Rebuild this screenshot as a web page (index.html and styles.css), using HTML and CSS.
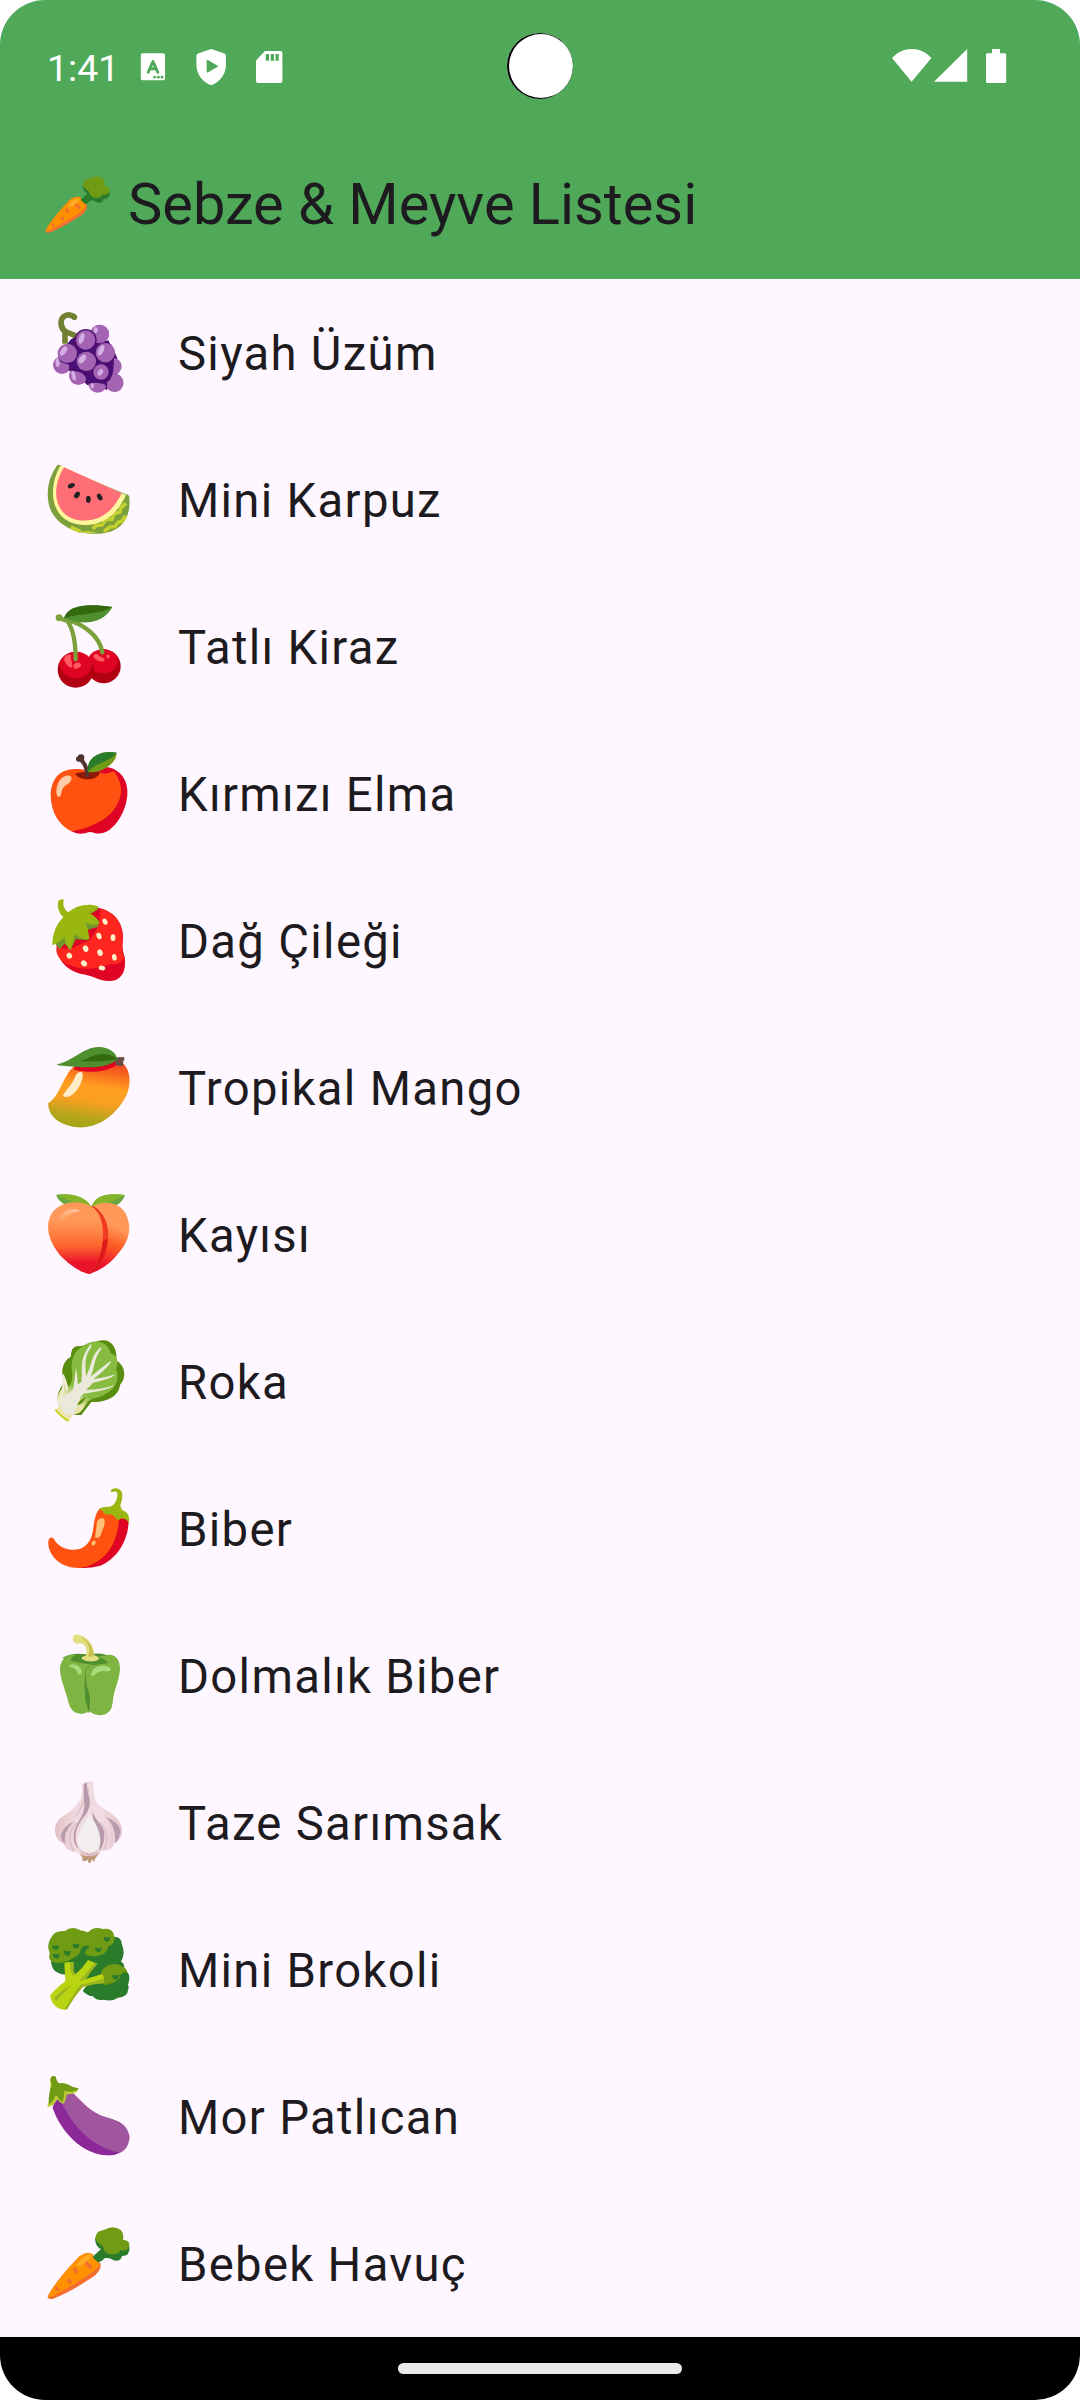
FILE: index.html
```html
<!DOCTYPE html>
<html lang="tr">
<head>
<meta charset="utf-8">
<title>Sebze &amp; Meyve Listesi</title>
<link rel="stylesheet" href="styles.css">
</head>
<body>
<div class="screen">
  <header class="app-bar">
    <div class="status">
      <div class="status-left">
        <span class="clock">1:41</span>
        <svg class="st" width="26" viewBox="140 48 26 38"><rect x="140.800" y="53.300" width="24.200" height="27" rx="1.800" fill="#fff"/><path d="M148.300 72.200L153 61.500L157.700 72.200M150 68.700H156" fill="none" stroke="#50a958" stroke-width="2.900" stroke-linecap="round" stroke-linejoin="round"/><g fill="#50a958"><circle cx="154.700" cy="77.200" r="1.400"/><circle cx="158.400" cy="77.200" r="1.400"/><circle cx="162" cy="77.200" r="1.400"/></g></svg>
        <svg class="st shield" width="31" viewBox="196 48 31 38"><path d="M211.200 49L223.800 53.200Q226 54 226 56V64.500C226 74.500 219.500 82.500 211.200 85.300C202.800 82.500 196.400 74.500 196.400 64.500V56Q196.400 54 198.600 53.200Z" fill="#fff"/><path d="M206.600 60.800Q206.800 59.400 208.300 60.200L218.400 66.200L208.300 72.200Q206.800 73 206.600 71.500Z" fill="#50a958"/></svg>
        <svg class="st sd" width="28" viewBox="255 48 28 38"><path d="M265 51H280.400Q282.400 51 282.400 53V81Q282.400 83 280.400 83H258Q256 83 256 81V60.500Z" fill="#fff"/><path d="M265.800 54h3.200v6.700h-3.200zM270.700 54h3.300v6.700h-3.300zM275.500 54h3.200v6.700h-3.200z" fill="#50a958"/></svg>
      </div>
      <span class="camera"></span>
      <div class="status-right">
        <svg class="st" width="120" viewBox="890 48 120 38"><g fill="#fff"><path d="M911.600 81.800L892 58C903 46 920.500 46 931.400 58Z"/><path d="M967.200 49V81.800H934Z"/><path d="M992 49h8v4.300h4.800q1.400 0 1.400 1.400v26.900q0 1.400-1.400 1.400h-17.400q-1.400 0-1.400-1.400V54.700q0-1.400 1.400-1.400h4.600z"/></g></svg>
      </div>
    </div>
    <div class="title-row">
      <svg class="title-icon" viewBox="36 462 294 294"><use href="#carrot"/></svg>
      <h1 class="title">Sebze &amp; Meyve Listesi</h1>
    </div>
  </header>

  <ul class="list">
    <li class="row"><svg class="icon" viewBox="36 24 294 294">
      <path d="M134 66C116 54 95 60 93 82C93 102 102 112 122 116Q132 118 140 126M105 108V146" fill="none" stroke="#728031" stroke-width="17"/><circle cx="133" cy="67" r="8.500" fill="#728031"/>
      <path d="M124 132L188 105L245 150L262 190L262 250L230 284L172 270L122 226L84 206V180Z" fill="#4a0f72"/>
      <g fill="#a564b3"><circle cx="209" cy="117" r="28"/><circle cx="96" cy="210" r="27"/><circle cx="250" cy="214" r="25"/><circle cx="145" cy="242" r="28"/><circle cx="203" cy="265" r="28"/><circle cx="253" cy="264" r="27"/></g>
      <path d="M187 112L200 130Q218 142 236 136L252 190L250 226Q246 252 232 262L230 284Q228 264 214 266Q202 262 188 264L168 268Q172 240 150 232Q130 226 116 228L118 210L84 198L92 176L128 140Z" fill="#4a0f72"/>
      <g fill="#a564b3"><circle cx="209" cy="117" r="28"/></g><circle cx="167" cy="135" r="33" fill="#4a0f72"/><g fill="#a564b3"><circle cx="167" cy="135" r="29"/><circle cx="112" cy="175" r="29"/><circle cx="226" cy="173" r="29"/><circle cx="169" cy="199" r="29"/><circle cx="213" cy="231" r="23"/><path d="M230 262Q256 258 266 238Q282 250 280 268Q274 292 252 290Q232 282 230 262Z"/></g>
      <g fill="#d3aee3"><ellipse cx="155" cy="130" rx="7.500" ry="17" transform="rotate(18 155 130)"/><ellipse cx="101" cy="168" rx="8" ry="16" transform="rotate(35 101 168)"/><ellipse cx="213" cy="166" rx="8" ry="17" transform="rotate(25 213 166)"/><ellipse cx="157" cy="192" rx="8" ry="15" transform="rotate(38 157 192)"/><ellipse cx="211" cy="232" rx="7" ry="11" transform="rotate(30 211 232)"/><ellipse cx="197" cy="105" rx="6" ry="9"/><ellipse cx="83" cy="203" rx="6" ry="13"/><ellipse cx="131" cy="242" rx="6" ry="15" transform="rotate(-15 131 242)"/><ellipse cx="187" cy="272" rx="5" ry="8"/></g>
    </svg><span class="name">Siyah Üzüm</span></li>

    <li class="row"><svg class="icon" viewBox="36 465 294 294">
      <path d="M82 510Q92 507 95 516L288 598Q298 598 298 610C303 665 277 714 205 716C140 721 78 690 60 640C45 595 56 545 82 510Z" fill="#7ca03c"/>
      <g fill="none" stroke="#c5d02e" stroke-width="11" stroke-linejoin="round"><path d="M288 625L272 639L270 651L252 656L246 673L227 673L216 690L198 691L189 702"/><path d="M287 662L276 679L264 682L254 695L239 696L222 710"/><path d="M122 696L151 710"/></g>
      <path d="M148 710Q180 705 202 714Q172 717 148 710Z" fill="#c5d02e"/>
      <path d="M90 513L102 516L274 594L288 600C258 668 205 699 141 688C66 672 50 588 90 513Z" fill="#fff59d"/>
      <path d="M102 517L275 595C246 656 200 684 142 675C78 662 58 588 102 517Z" fill="#ff6d76"/>
      <g fill="#212121"><ellipse cx="124" cy="572" rx="11" ry="7" transform="rotate(-25 124 572)"/><ellipse cx="141" cy="600" rx="11" ry="7.500" transform="rotate(-55 141 600)"/><ellipse cx="175" cy="613" rx="7" ry="11"/><ellipse cx="209" cy="606" rx="7" ry="11" transform="rotate(-30 209 606)"/></g>
    </svg><span class="name">Mini Karpuz</span></li>

    <li class="row"><svg class="icon" viewBox="36 21 294 294">
      <circle cx="221" cy="229" r="51" fill="#b00012"/><ellipse cx="219" cy="214" rx="45" ry="36" fill="#df0423"/>
      <ellipse cx="137" cy="239" rx="54" ry="54" fill="#b00012"/><path d="M88 222Q100 186 138 185Q180 188 187 222Q180 263 137 265Q96 260 88 222Z" fill="#df0423"/>
      <path d="M102 208C104 196 117 190 124 196C120 208 128 216 127 230C124 240 107 226 102 208ZM131 224C137 216 149 216 154 223C151 238 130 240 131 230ZM190 200C192 190 202 188 208 198Q217 203 224 206C226 218 204 219 190 200ZM228 196q8-4 12 3q-2 8-9 6z" fill="#ff5a62"/>
      <path d="M88 83Q104 92 112 92C130 118 137 160 137 208M106 89C160 100 209 138 217 187" fill="none" stroke="#7ca03c" stroke-width="13" stroke-linecap="round"/><circle cx="87" cy="83" r="10" fill="#7ca03c"/>
      <path d="M102 84C115 47 166 39 247 51C224 95 166 112 102 84Z" fill="#508f2e"/><path d="M102 84C115 47 166 39 247 51C210 73 150 70 102 84Z" fill="#346a0f"/>
    </svg><span class="name">Tatlı Kiraz</span></li>

    <li class="row"><svg class="icon" viewBox="36 462 294 294">
      <path d="M172 541Q224 524 250 536C306 564 300 632 270 683C248 719 219 738 191 728Q180 723 168 729Q143 735 124 724Z" fill="#df0423"/>
      <path d="M172 541C95 524 63 561 62 617C63 666 87 706 124 724C167 718 213 698 240 673C283 627 281 583 252 544Q220 557 210 546Z" fill="#ff5210"/>
      <path d="M136 550Q172 541 210 546C206 574 144 576 136 550Z" fill="#8f1909"/>
      <path d="M144 503C159 512 172 532 172 560" fill="none" stroke="#4f332c" stroke-width="12"/><circle cx="153" cy="503" r="10" fill="#4f332c"/><circle cx="146" cy="507" r="8" fill="#4f332c"/>
      <path d="M174 546C167 508 206 479 260 488C260 520 214 553 174 546Z" fill="#709b15"/><path d="M174 546C167 508 206 479 260 488C233 521 196 516 174 546Z" fill="#2a7b2a"/>
      <path d="M79 608C78 571 104 551 121 558C131 566 119 580 107 586C92 598 96 611 91 619Q82 625 79 608Z" fill="#ffcca8"/>
    </svg><span class="name">Kırmızı Elma</span></li>

    <li class="row"><svg class="icon" viewBox="36 18 294 294">
      <path d="M79 178C89 119 150 69 207 69C259 80 285 124 278 171Q276 198 284 215C290 260 274 288 236 288C204 287 188 270 150 266C104 253 81 221 79 178Z" fill="#df0423"/>
      <path d="M88 190L120 192L180 165L206 122L212 72C258 81 282 124 277 171Q273 206 283 216Q276 239 240 238C204 249 181 255 143 248C99 240 77 216 79 190Z" fill="#ff2620"/>
      <path d="M77 176L88 193L104 176L122 195L137 163L176 166L172 135L203 126L208 107L180 88L207 72L138 67Z" fill="#6f982c"/>
      <path d="M84 53Q84 43 101 43Q96 71 115 82C137 62 174 52 207 65Q190 85 175 84Q198 90 208 116Q190 124 165 113Q175 127 178 162Q151 165 134 147Q132 173 120 194Q104 178 104 155Q88 175 67 180C67 145 80 116 100 97Q80 77 84 53Z" fill="#9ab711"/>
      <g fill="#fff3ca"><ellipse cx="225" cy="110" rx="7" ry="9.500" transform="rotate(-25 225 110)"/><ellipse cx="207" cy="153" rx="7.500" ry="10" transform="rotate(-20 207 153)"/><ellipse cx="249" cy="158" rx="7" ry="10"/><ellipse cx="167" cy="191" rx="8" ry="10" transform="rotate(-25 167 191)"/><ellipse cx="210" cy="203" rx="8" ry="10" transform="rotate(-25 210 203)"/><ellipse cx="253" cy="217" rx="7" ry="10" transform="rotate(-10 253 217)"/><ellipse cx="118" cy="212" rx="8" ry="9" transform="rotate(-35 118 212)"/><ellipse cx="162" cy="235" rx="8" ry="10" transform="rotate(-45 162 235)"/><ellipse cx="216" cy="249" rx="10" ry="7" transform="rotate(10 216 249)"/></g>
    </svg><span class="name">Dağ Çileği</span></li>

    <li class="row"><svg class="icon" viewBox="36 459 294 294">
      <defs><linearGradient id="mango" x1=".6" y1="0" x2=".42" y2="1"><stop offset=".05" stop-color="#f5511e"/><stop offset=".38" stop-color="#ff9e20"/><stop offset=".6" stop-color="#f9a021"/><stop offset=".86" stop-color="#b3a51a"/><stop offset="1" stop-color="#a3a516"/></linearGradient></defs>
      <path d="M133 543Q204 544 259 528Q280 532 288 546C305 572 300 615 285 639C251 698 200 730 143 727C96 722 57 702 54 655C89 636 99 571 133 543Z" fill="url(#mango)"/>
      <path d="M133 543L260 522L266 537C229 562 184 566 133 554Z" fill="#df0423"/>
      <path d="M255 531L262 517L281 516L284 523L280 528L279 543Q265 546 255 537Z" fill="#6f4c41"/>
      <path d="M82 538C119 531 148 500 184 489C224 479 256 496 263 523Q230 550 180 546Q135 548 82 541Z" fill="#508f2e"/><path d="M148 529C178 522 184 507 222 507Q248 508 262 523Q220 532 148 529Z" fill="#346a0f"/>
      <path d="M137 571Q146 556 158 563C162 584 143 622 119 634Q108 638 99 633C103 619 127 602 137 571Z" fill="#ffecc8"/>
    </svg><span class="name">Tropikal Mango</span></li>

    <li class="row"><svg class="icon" viewBox="36 15 294 294">
      <defs><linearGradient id="peach" x1="0" y1="0" x2="0" y2="1"><stop offset=".25" stop-color="#ff9858"/><stop offset=".6" stop-color="#ff682f"/><stop offset=".84" stop-color="#ea142d"/></linearGradient><linearGradient id="peachSide" x1=".6" y1="0" x2=".4" y2="1"><stop offset=".32" stop-color="#ff9858"/><stop offset=".55" stop-color="#ff6125"/><stop offset=".9" stop-color="#ea142d"/></linearGradient><linearGradient id="shine" x1="1" y1="0" x2="0" y2="1"><stop offset=".1" stop-color="#ffc19b"/><stop offset="1" stop-color="#ff9c60"/></linearGradient></defs>
      <path d="M78 45C110 39 160 43 184 80Q147 78 110 76Q88 68 78 45Z" fill="#69a63f"/><path d="M78 45C110 39 165 44 184 80Q150 72 128 66Z" fill="#86b52c"/><path d="M285 45C225 37 198 48 184 80Q224 80 260 76Q278 65 285 45Z" fill="#69a63f"/><path d="M285 45C225 37 198 48 184 80Q223 75 242 65Z" fill="#86b52c"/>
      <path d="M186 80C218 60 263 64 286 98C308 143 298 183 264 221C238 255 203 274 178 282Z" fill="url(#peachSide)"/>
      <path d="M182 78Q199 78 219 107C247 151 234 229 195 273L178 282Z" fill="#dd1a1b"/><path d="M186 82Q236 105 234 173L217 186Z" fill="#f23b20"/>
      <path d="M184 79C148 60 98 62 70 94C42 129 53 179 87 222C118 256 151 277 178 282C222 242 240 112 184 79Z" fill="url(#peach)"/>
      <path d="M87 121C89 93 127 78 151 92C139 98 124 98 112 107C100 114 90 132 87 121Z" fill="url(#shine)"/>
    </svg><span class="name">Kayısı</span></li>

    <li class="row"><svg class="icon" viewBox="36 456 294 294">
      <defs><linearGradient id="leaf" x1=".8" y1="0" x2=".2" y2="1"><stop offset=".68" stop-color="#88bc40"/><stop offset=".83" stop-color="#e8e4ae"/></linearGradient></defs>
      <path d="M202 484C238 471 263 497 259 541C287 558 290 594 270 615C268 641 241 668 184 666L154 705L130 705L83 660Q80 633 105 607C91 583 94 545 122 530Q124 492 152 499Z" fill="#588d0f"/>
      <path d="M161 497C199 471 237 490 241 519C265 526 265 552 258 568C270 597 258 626 231 639C210 657 180 651 170 670C158 692 147 704 126 704L86 679C80 659 82 635 106 616L97 581Q108 604 117 621Q132 597 125 572C124 540 130 514 161 497Z" fill="url(#leaf)"/>
      <path d="M139 675Q151 658 167 650Q160 674 139 675Z" fill="#588d0f"/>
      <path d="M78 688L89 678L128 706L115 724Q92 715 78 688Z" fill="#eee3a8"/><path d="M76 689Q94 711 116 723" fill="none" stroke="#b8d100" stroke-width="5"/>
      <path d="M88 672C91 647 121 642 130 625Q133 603 138 565Q142 577 143 613L154 606C160 567 145 540 180 495Q187 488 182 503C159 534 168 568 168 588C184 566 182 524 212 502Q218 502 211 511C190 541 194 567 181 590L242 542C246 551 218 573 191 598Q226 593 257 583Q242 598 190 608L168 630Q219 629 253 615Q239 631 160 641C144 658 141 679 131 705H107Z" fill="#ebe9dc"/>
      <path d="M88 674C94 641 107 621 98 584Q108 604 111 632" fill="none" stroke="#efebd8" stroke-width="7"/>
    </svg><span class="name">Roka</span></li>

    <li class="row"><svg class="icon" viewBox="36 12 294 294">
      <path d="M262 112L296 134C296 192 264 250 211 272Q181 281 148 279Z" fill="#df0423"/>
      <path d="M210 99Q194 116 190 159Q184 209 151 221C119 229 88 222 70 190Q60 183 55 198C52 239 89 281 151 279C224 266 263 210 267 129Z" fill="#ff5210"/>
      <path d="M241 48C245 36 278 34 277 62Q276 81 271 91Q274 107 284 109Q300 118 297 144Q287 128 270 131Q265 142 250 121Q241 115 234 119Q220 120 218 106L207 105Q210 94 240 95Q256 90 261 69Q266 51 255 49Q245 54 241 48Z" fill="#9ab711"/>
      <path d="M201 141Q205 127 220 130Q228 136 221 157L211 183Q204 192 195 187ZM185 203q7-10 12-4q1 8-4 12q-10 3-8-8z" fill="#ffbf77"/>
    </svg><span class="name">Biber</span></li>

    <li class="row"><svg class="icon" viewBox="36 453 294 294">
      <path d="M98 548Q127 531 169 538Q226 529 256 552C253 590 203 576 182 590C176 639 188 683 177 714Q166 708 164 670L159 575L122 568Z" fill="#508f2e"/>
      <path d="M137 541C115 534 88 552 90 587C94 624 108 646 115 682Q123 717 155 717Q168 717 177 709Q164 684 163 638L166 589Q169 576 189 569Q156 566 122 557Q125 544 137 541ZM233 540C257 536 271 557 270 584C266 624 250 646 248 684Q244 716 217 720Q197 723 178 709Q188 680 171 635Q164 599 171 577C184 567 215 570 235 564Q227 550 202 545Q218 542 233 540Z" fill="#7eb441"/>
      <path d="M117 570C132 562 155 574 156 590Q153 601 144 598Q141 584 130 579Q119 577 117 570ZM183 598C187 576 207 571 222 572Q240 574 243 582Q240 593 222 588Q205 587 195 599Q184 607 183 598Z" fill="#a8da7a"/>
      <path d="M135 479C165 476 193 508 193 541Q208 547 208 553Q184 567 155 552Q152 545 168 542Q177 512 150 504Q139 512 130 499Q124 484 135 479Z" fill="#e2df80"/><path d="M151 485C176 493 191 520 191 542Q180 549 174 542C184 522 173 497 151 485Z" fill="#c8bf50"/>
    </svg><span class="name">Dolmalık Biber</span></li>

    <li class="row"><svg class="icon" viewBox="36 9 294 294">
      <defs><linearGradient id="garlic"><stop stop-color="#e3bfc6"/><stop offset=".3" stop-color="#efd9de"/><stop offset=".7" stop-color="#f0dce1"/><stop offset="1" stop-color="#e4c4cb"/></linearGradient></defs>
      <path d="M145 246H211Q201 256 195 267L192 276L185 268L182 279L176 279L173 269L166 274L156 271L158 263Z" fill="#c09777"/>
      <path d="M159 40Q177 31 190 36Q190 79 199 96C216 121 269 131 276 177Q279 207 252 220Q248 244 213 243Q195 261 176 258Q158 258 146 248Q109 246 102 222C64 203 69 157 99 139C132 116 162 93 156 48Z" fill="url(#garlic)"/>
      <path d="M176 59Q161 100 138 140M138 158C119 182 110 205 132 244M212 159C239 193 232 220 220 241" fill="none" stroke="#dfc0c8" stroke-width="5"/>
      <path d="M161 41L171 39C170 78 191 91 170 129C144 164 124 190 147 239Q128 220 131 194C135 154 173 136 161 83ZM188 124C196 157 228 165 223 204Q220 230 208 243C214 199 184 169 188 124ZM225 140C255 151 272 166 270 188Q266 213 255 219C259 182 247 159 225 140ZM134 154Q104 166 93 193Q92 211 106 223C100 197 110 174 134 154Z" fill="#b99aac"/>
      <path d="M178 125C186 145 208 172 211 206Q213 243 179 250Q145 246 142 212C143 180 171 155 178 125Z" fill="#f1eeed"/><path d="M148 239Q178 260 206 240Q198 258 177 258Q156 257 148 239Z" fill="#dfb9c6"/>
    </svg><span class="name">Taze Sarımsak</span></li>

    <li class="row"><svg class="icon" viewBox="36 450 294 294">
      <path d="M63 566Q62 600 84 608Q100 617 120 612L179 640Q158 658 159 664Q176 681 188 678Q199 694 222 689Q245 696 264 683Q294 681 294 659Q298 655 294 644Q306 608 283 602Q285 579 273 575Q288 548 275 521Q275 501 253 500L220 490L90 550Z" fill="#2a7b2a"/>
      <path d="M151 481Q124 466 105 483Q73 480 62 505Q49 527 59 550Q51 576 78 578Q105 582 128 565Q149 558 154 535Q164 519 179 532Q159 545 168 554Q187 562 204 557Q231 553 235 529Q257 522 253 500Q250 472 218 477Q192 467 174 487Q162 483 151 481ZM211 621C212 588 247 573 273 587Q292 595 292 607Q269 606 269 624Q256 639 235 642Q215 654 211 621Z" fill="#709b15"/>
      <g fill="#2a7b2a"><path id="floret" d="M66 528q5-5 10 0q7-5 11 0q-1 10-9 12q-10-2-12-12z"/><use href="#floret" x="61" y="-4"/><use href="#floret" x="35" y="17"/><use href="#floret" x="2" y="26"/><use href="#floret" x="128" y="7"/><use href="#floret" x="154" y="-25"/><use href="#floret" x="180" y="89"/></g>
      <path d="M103 579Q116 573 130 578V605L136 613Q158 595 174 570L201 581Q183 602 165 628Q192 619 217 612Q224 620 220 639Q183 642 158 652Q136 675 112 716Q103 721 89 716Q65 706 60 677Q78 654 106 634Z" fill="#b9d512"/>
      <path d="M194 579L202 582Q184 601 169 626L146 635Q172 607 194 579ZM121 576H131V604L136 611L130 617Q119 605 121 576ZM220 627V640Q183 642 158 652Q136 675 112 717L102 720Q130 673 150 645Q185 637 220 627ZM127 644Q92 675 81 692Q74 695 72 684Q97 657 127 644Z" fill="#9ab51f"/>
    </svg><span class="name">Mini Brokoli</span></li>

    <li class="row"><svg class="icon" viewBox="36 21 294 294">
      <path d="M78 112L123 94C149 115 166 144 210 165C250 181 292 181 299 232C296 263 281 284 238 286C153 285 93 212 68 143Z" fill="#a0569f"/><path d="M78 116L94 125C129 199 181 257 267 278Q255 286 238 286C153 285 93 212 68 143Z" fill="#8d2899"/>
      <path d="M62 55Q66 46 76 49L86 75L108 72L126 83L146 85Q143 103 110 103Q107 129 98 131Q87 126 82 118Q72 140 53 141Q51 132 58 128Z" fill="#bccb35"/><path d="M62 55Q68 43 78 52Q77 60 87 70Q101 67 116 74Q127 82 146 85Q137 98 113 94Q97 91 103 97Q103 115 97 126Q83 116 82 107Q75 104 73 114Q69 127 56 133Q55 97 66 75Q59 62 62 55Z" fill="#709b15"/>
    </svg><span class="name">Mor Patlıcan</span></li>

    <li class="row"><svg class="icon" viewBox="36 462 294 294"><g id="carrot">
      <path d="M195 535Q196 562 213 567L187 591L203 609Q213 606 225 594Q239 592 251 601Q272 606 276 588Q302 588 298 558L225 528Z" fill="#2a7b2a"/><path d="M222 510Q250 493 272 510Q283 522 279 539Q301 541 298 557Q293 576 273 570Q264 586 240 583Q221 577 218 557Q199 549 196 534Q198 512 222 510Z" fill="#709b15"/>
      <path d="M53 710C60 688 118 619 149 589Q173 572 190 584L187 592L203 607Q216 605 210 627Q201 645 178 658Q119 697 70 716Q53 719 53 710Z" fill="#f2702f"/><path d="M54 711C60 688 118 619 149 589Q173 572 190 584L187 592L203 607Q214 614 201 623C184 644 118 680 76 704Q56 715 54 711Z" fill="#ff9100"/>
      <path d="M139 614Q164 581 184 585Q178 605 157 616Q142 624 139 614Z" fill="#ffab24"/>
      <g fill="#f2702f"><ellipse cx="176" cy="616" rx="6" ry="14" transform="rotate(-40 176 616)"/><ellipse cx="137" cy="632" rx="6" ry="10" transform="rotate(-35 137 632)"/><ellipse cx="118" cy="663" rx="6" ry="9" transform="rotate(-38 118 663)"/><ellipse cx="82" cy="687" rx="5" ry="8" transform="rotate(-35 82 687)"/></g>
    </g></svg><span class="name">Bebek Havuç</span></li>
  </ul>
  <footer class="nav"><span class="pill"></span></footer>
</div>
</body>
</html>
```

FILE: styles.css
```css
* { box-sizing: border-box; }

body {
  margin: 0;
  background: #fff;
  font-family: Roboto, "Noto Sans", sans-serif;
  color: #1d1b20;
}

.screen {
  width: 1080px;
  height: 2400px;
  display: flex;
  flex-direction: column;
  overflow: hidden;
  border-radius: 45px;
  background: #fef7ff;
}

.app-bar { height: 279px; background: #50a958; }

.status {
  position: relative;
  height: 132px;
  padding: 48px 70px 0 47px;
  display: flex;
  justify-content: space-between;
}

.status-left, .status-right { display: flex; align-items: flex-start; }

.clock {
  width: 93px;
  height: 38px;
  color: #fff;
  font-size: 37.500px;
  line-height: 40px;
}

.st { display: block; height: 38px; }
.shield { margin-left: 30px; }
.sd { margin-left: 28px; }

.camera {
  position: absolute;
  left: 507px;
  top: 33px;
  width: 66px;
  height: 66px;
  border-radius: 50%;
  background: #fff;
  box-shadow: inset 1px 0 0 1px #000;
}

.title-row {
  height: 147px;
  padding: 0 0 3px 41px;
  display: flex;
  align-items: center;
}

.title-icon { width: 77px; height: 77px; margin-right: 10px; }

.title {
  margin: 0;
  font-size: 57.750px;
  font-weight: 400;
  line-height: 74px;
  white-space: nowrap;
}

.list { margin: 0; padding: 0; list-style: none; }

.row {
  height: 147px;
  padding-left: 42px;
  display: flex;
  align-items: center;
}

.icon { width: 98px; height: 98px; margin: 0 38px 1px 0; flex: none; }

.name {
  padding-top: 3px;
  font-size: 47.250px;
  line-height: 72px;
  letter-spacing: 1.312px;
  white-space: nowrap;
}

.nav {
  flex: 1;
  display: flex;
  justify-content: center;
  align-items: center;
  background: #000;
}

.pill { width: 284px; height: 11px; border-radius: 6px; background: #eaeaea; }
```
